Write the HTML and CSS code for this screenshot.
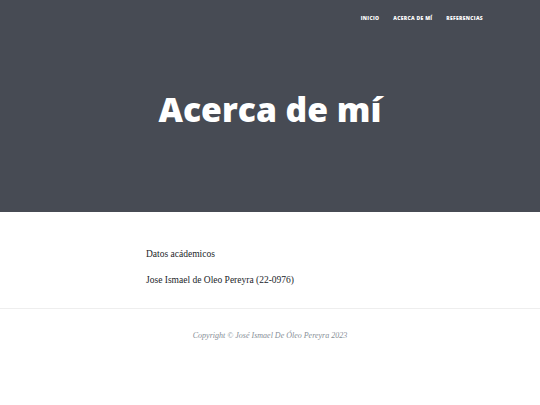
FILE: index.html
```html
<!DOCTYPE html>
<html lang="es">
<head>
<meta charset="utf-8">
<title>Acerca de mí</title>
<link rel="stylesheet" href="styles.css">
</head>
<body>
<header class="masthead">
  <nav class="nav">
    <a class="nav-link" href="#">Inicio</a>
    <a class="nav-link" href="#">Acerca de mí</a>
    <a class="nav-link" href="#">Referencias</a>
  </nav>
  <div class="heading">
    <h1 class="title">Acerca de mí</h1>
  </div>
</header>
<main class="content">
  <p class="para">Datos acádemicos</p>
  <p class="para">Jose Ismael de Oleo Pereyra (22-0976)</p>
</main>
<footer class="footer">
  <p class="copy">Copyright © José Ismael De Óleo Pereyra 2023</p>
</footer>
</body>
</html>
```
FILE: styles.css
```css
html, body {
  margin: 0;
  padding: 0;
  background: #ffffff;
}
body {
  font-family: "Liberation Serif", "DejaVu Serif", serif;
  color: #212529;
}
.masthead {
  background: #474b54;
  height: 212px;
  display: flex;
  flex-direction: column;
}
.nav {
  display: flex;
  justify-content: flex-end;
  gap: 14px;
  padding: 13px 57px 0 0;
  height: 10px;
}
.nav-link {
  font-family: "Open Sans", sans-serif;
  font-weight: 800;
  font-size: 5px;
  line-height: 10px;
  letter-spacing: 0.3px;
  text-transform: uppercase;
  color: #ffffff;
  text-decoration: none;
}
.heading {
  display: flex;
  justify-content: center;
  padding-top: 62px;
}
.title {
  margin: 0;
  font-family: "Open Sans", sans-serif;
  font-weight: 800;
  font-size: 33.7px;
  line-height: 48px;
  color: #ffffff;
}
.content {
  padding: 36px 0 0 146px;
  height: 60px;
  border-bottom: 1px solid #eeeeee;
  display: flex;
  flex-direction: column;
  gap: 13px;
}
.para {
  margin: 0;
  font-size: 9.5px;
  line-height: 13px;
  color: #212529;
}
.footer {
  padding-top: 22px;
  text-align: center;
}
.copy {
  margin: 0;
  font-style: italic;
  font-size: 8px;
  color: #868e96;
}
```
